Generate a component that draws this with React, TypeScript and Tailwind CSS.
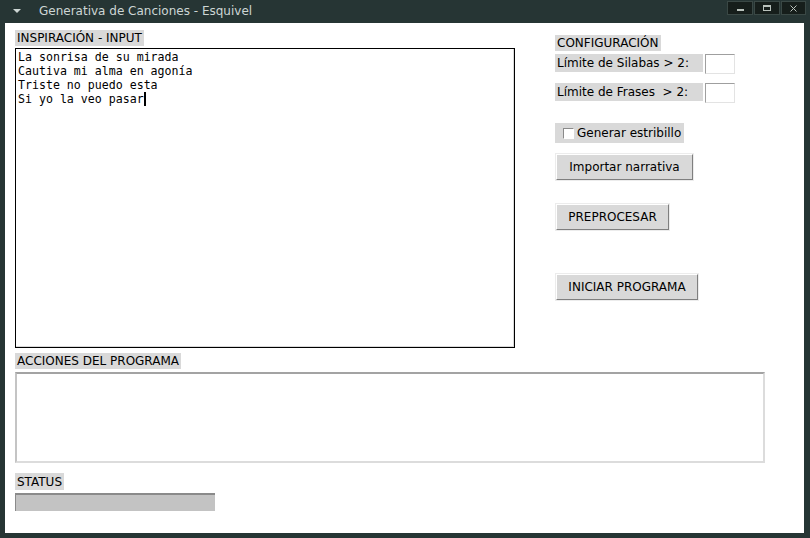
import { ReactNode } from 'react'

const font = { fontFamily: '"DejaVu Sans", Verdana, sans-serif' }
const mono = { fontFamily: '"DejaVu Sans Mono", "Liberation Mono", monospace' }

function Label({ children, className = '' }: { children: ReactNode; className?: string }) {
  return <div className={`inline-flex items-center whitespace-pre bg-[#d9d9d9] px-[2px] text-[12px] text-black ${className}`}>{children}</div>
}

function Button({ children, w }: { children: ReactNode; w: string }) {
  return (
    <button
      className={`${w} h-[28px] bg-[#d9d9d9] text-[12px] text-black border border-[#ececec] flex items-center justify-center`}
    >
      <span className="w-full h-full flex items-center justify-center border-b border-r border-[#7f7f7f] border-t-white border-l-white border-t border-l">
        {children}
      </span>
    </button>
  )
}

function Entry() {
  return <div className="w-[30px] h-[20px] bg-white border border-t-[#9f9f9f] border-l-[#9f9f9f] border-b-[#e3e3e3] border-r-[#e3e3e3]" />
}

export default function App() {
  return (
    <div className="w-[810px] h-[538px] bg-[#263534] flex flex-col" style={font}>
      {/* title bar */}
      <div className="h-[23px] flex items-center text-[#cdd6d4]">
        <svg width="10" height="6" viewBox="0 0 10 6" className="ml-[12px] mt-[-2px]">
          <path d="M1 1 L9 1 L5 5 Z" fill="#cdd6d4" />
        </svg>
        <span className="ml-[17px] text-[12px] leading-none mt-[-1px]">Generativa de Canciones - Esquivel</span>
        <div className="ml-auto mr-[4px] mt-[-7px] flex gap-[1px]">
          <div className="w-[26px] h-[14px] bg-[#161e1b] border border-[#3a4845] flex items-center justify-center">
            <div className="w-[7px] h-[2px] bg-[#b9c2bc] mt-[3px]" />
          </div>
          <div className="w-[26px] h-[14px] bg-[#161e1b] border border-[#3a4845] flex items-center justify-center">
            <div className="w-[8px] h-[6px] border border-[#b9c2bc] border-t-2" />
          </div>
          <div className="w-[25px] h-[14px] bg-[#161e1b] border border-[#3a4845] flex items-center justify-center">
            <svg width="7" height="7" viewBox="0 0 7 7">
              <path d="M0.5 0.5 L6.5 6.5 M6.5 0.5 L0.5 6.5" stroke="#b9c2bc" strokeWidth="1" />
            </svg>
          </div>
        </div>
      </div>

      {/* client area */}
      <div className="flex-1 ml-[5px] mr-[6px] mb-[5px] bg-white pl-[10px] pt-[7px] flex flex-col">
        <div className="flex">
          <div className="w-[500px] flex flex-col">
            <Label className="h-[16px] self-start">INSPIRACIÓN - INPUT</Label>
            <div className="mt-[2px] h-[300px] border border-black">
              <div className="h-full border-r border-b border-[#d9d9d9] pl-[2px] pt-[1px] text-[11.6px] leading-[14px] text-black whitespace-pre" style={mono}>
                <div>La sonrisa de su mirada</div>
                <div>Cautiva mi alma en agonía</div>
                <div>Triste no puedo esta</div>
                <div className="flex items-center">
                  Si yo la veo pasar<span className="inline-block w-[2px] h-[14px] bg-black" />
                </div>
              </div>
            </div>
          </div>

          <div className="ml-[40px] pt-[5px] flex flex-col items-start">
            <Label className="h-[16px]">CONFIGURACIÓN</Label>
            <div className="mt-[3px] flex items-start">
              <Label className="h-[18px] w-[148px]">Límite de Silabas &gt; 2:</Label>
              <div className="ml-[2px]"><Entry /></div>
            </div>
            <div className="mt-[9px] flex items-start">
              <Label className="h-[18px] w-[148px]">Límite de Frases  &gt; 2:</Label>
              <div className="ml-[2px]"><Entry /></div>
            </div>
            <Label className="mt-[20px] h-[20px] pl-[8px] pr-[3px]">
              <span className="w-[11px] h-[11px] bg-white border border-t-[#8a8a8a] border-l-[#8a8a8a] border-b-white border-r-white mr-[3px]" />
              Generar estribillo
            </Label>
            <div className="mt-[10px]"><Button w="w-[139px]">Importar narrativa</Button></div>
            <div className="mt-[22px]"><Button w="w-[115px]">PREPROCESAR</Button></div>
            <div className="mt-[42px]"><Button w="w-[144px]">INICIAR PROGRAMA</Button></div>
          </div>
        </div>

        <Label className="mt-[5px] h-[16px] self-start">ACCIONES DEL PROGRAMA</Label>
        <div className="mt-[3px] w-[750px] h-[91px] bg-white border-2 border-t-[#a3a3a3] border-l-[#c4c4c4] border-b-[#dcdcdc] border-r-[#dcdcdc]" />

        <Label className="mt-[10px] h-[17px] self-start">STATUS</Label>
        <div className="mt-[3px] w-[200px] h-[18px] bg-[#c3c3c3] border-t-2 border-l border-t-[#8a8a8a] border-l-[#8a8a8a]" />
      </div>
    </div>
  )
}
